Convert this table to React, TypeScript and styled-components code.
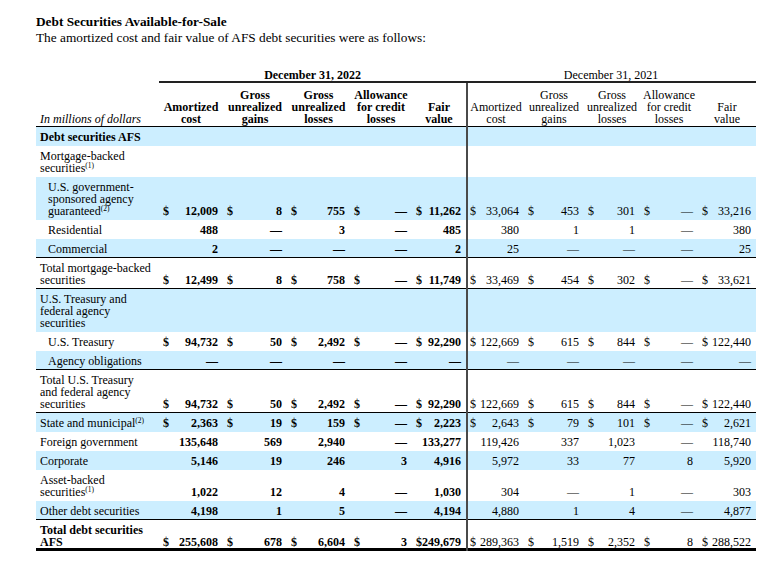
import React from 'react';
import styled, { createGlobalStyle } from 'styled-components';

const GlobalStyle = createGlobalStyle`
  html, body { margin: 0; padding: 0; background: #fff; }
  body {
    font-family: "Liberation Serif", "Times New Roman", serif;
    color: #000;
  }
`;

const COLS = '123px 64px 64px 63px 62px 54px 58px 60px 56px 58px 58px';
const SHADE = '#cceeff';
const DIVIDER = '#4a4a4a';

const Page = styled.div`
  padding: 14px 0 0 36px;
  width: 720px;
`;

const Title = styled.h1`
  margin: 0;
  font-size: 13.3px;
  line-height: 16px;
  font-weight: bold;
`;

const Subtitle = styled.p`
  margin: 0;
  font-size: 13.3px;
  line-height: 16px;
`;

const Table = styled.div`
  margin-top: 21px;
  font-size: 12px;
  line-height: 12px;
`;

const Row = styled.div<{ $shade?: boolean; $rule?: 'thin' | 'thick' }>`
  display: grid;
  grid-template-columns: ${COLS};
  background: ${(p) => (p.$shade ? SHADE : 'transparent')};
  box-shadow: ${(p) =>
    p.$rule === 'thin'
      ? 'inset 0 -1px 0 #000'
      : p.$rule === 'thick'
      ? 'inset 0 -3px 0 #000'
      : 'none'};
`;

const PeriodCell = styled.div<{ $bold?: boolean; $span: string }>`
  grid-column: ${(p) => p.$span};
  text-align: center;
  padding-top: 2px;
  font-weight: ${(p) => (p.$bold ? 'bold' : 'normal')};
  border-bottom: 2px solid #222;
`;

const HeadCell = styled.div<{ $bold?: boolean; $divider?: boolean }>`
  display: flex;
  flex-direction: column;
  justify-content: flex-end;
  text-align: center;
  padding: 6px 0 2px;
  font-weight: ${(p) => (p.$bold ? 'bold' : 'normal')};
  border-left: ${(p) => (p.$divider ? `2px solid ${DIVIDER}` : 'none')};
`;

const UnitsCell = styled.div`
  display: flex;
  align-items: flex-end;
  padding: 6px 4px 2px;
  font-style: italic;
`;

const LabelCell = styled.div<{ $indent?: boolean; $strong?: boolean }>`
  padding: 4px 2px 3px ${(p) => (p.$indent ? 12 : 4)}px;
  font-weight: ${(p) => (p.$strong ? 'bold' : 'normal')};
`;

const NumCell = styled.div<{ $bold?: boolean; $divider?: boolean }>`
  display: flex;
  justify-content: space-between;
  align-items: flex-end;
  padding: 4px 5px 3px ${(p) => (p.$divider ? 2 : 4)}px;
  font-weight: ${(p) => (p.$bold ? 'bold' : 'normal')};
  border-left: ${(p) => (p.$divider ? `2px solid ${DIVIDER}` : 'none')};
  white-space: nowrap;
`;

const Sup = styled.sup`
  font-size: 7.5px;
  line-height: 0;
  vertical-align: 4px;
`;

type RowDef = {
  label: React.ReactNode;
  indent?: boolean;
  strong?: boolean;
  shade?: boolean;
  rule?: 'thin' | 'thick';
  values?: string[];
};

const D = '—';

const rows: RowDef[] = [
  { label: 'Debt securities AFS', strong: true, shade: true },
  {
    label: (
      <>
        Mortgage-backed
        <br />
        securities<Sup>(1)</Sup>
      </>
    ),
  },
  {
    label: (
      <>
        U.S. government-
        <br />
        sponsored agency
        <br />
        guaranteed<Sup>(2)</Sup>
      </>
    ),
    indent: true,
    shade: true,
    values: ['$12,009', '$8', '$755', '$' + D, '$11,262', '$33,064', '$453', '$301', '$' + D, '$33,216'],
  },
  {
    label: 'Residential',
    indent: true,
    values: ['488', D, '3', D, '485', '380', '1', '1', D, '380'],
  },
  {
    label: 'Commercial',
    indent: true,
    shade: true,
    rule: 'thin',
    values: ['2', D, D, D, '2', '25', D, D, D, '25'],
  },
  {
    label: (
      <>
        Total mortgage-backed
        <br />
        securities
      </>
    ),
    rule: 'thin',
    values: ['$12,499', '$8', '$758', '$' + D, '$11,749', '$33,469', '$454', '$302', '$' + D, '$33,621'],
  },
  {
    label: (
      <>
        U.S. Treasury and
        <br />
        federal agency
        <br />
        securities
      </>
    ),
    shade: true,
  },
  {
    label: 'U.S. Treasury',
    indent: true,
    values: ['$94,732', '$50', '$2,492', '$' + D, '$92,290', '$122,669', '$615', '$844', '$' + D, '$122,440'],
  },
  {
    label: 'Agency obligations',
    indent: true,
    shade: true,
    rule: 'thin',
    values: [D, D, D, D, D, D, D, D, D, D],
  },
  {
    label: (
      <>
        Total U.S. Treasury
        <br />
        and federal agency
        <br />
        securities
      </>
    ),
    rule: 'thin',
    values: ['$94,732', '$50', '$2,492', '$' + D, '$92,290', '$122,669', '$615', '$844', '$' + D, '$122,440'],
  },
  {
    label: (
      <>
        State and municipal<Sup>(2)</Sup>
      </>
    ),
    shade: true,
    values: ['$2,363', '$19', '$159', '$' + D, '$2,223', '$2,643', '$79', '$101', '$' + D, '$2,621'],
  },
  {
    label: 'Foreign government',
    values: ['135,648', '569', '2,940', D, '133,277', '119,426', '337', '1,023', D, '118,740'],
  },
  {
    label: 'Corporate',
    shade: true,
    values: ['5,146', '19', '246', '3', '4,916', '5,972', '33', '77', '8', '5,920'],
  },
  {
    label: (
      <>
        Asset-backed
        <br />
        securities<Sup>(1)</Sup>
      </>
    ),
    values: ['1,022', '12', '4', D, '1,030', '304', D, '1', D, '303'],
  },
  {
    label: 'Other debt securities',
    shade: true,
    rule: 'thin',
    values: ['4,198', '1', '5', D, '4,194', '4,880', '1', '4', D, '4,877'],
  },
  {
    label: (
      <>
        Total debt securities
        <br />
        AFS
      </>
    ),
    strong: true,
    rule: 'thick',
    values: ['$255,608', '$678', '$6,604', '$3', '$249,679', '$289,363', '$1,519', '$2,352', '$8', '$288,522'],
  },
];

const headers: React.ReactNode[] = [
  <>Amortized<br />cost</>,
  <>Gross<br />unrealized<br />gains</>,
  <>Gross<br />unrealized<br />losses</>,
  <>Allowance<br />for credit<br />losses</>,
  <>Fair<br />value</>,
];

function Value({ raw, index }: { raw?: string; index: number }) {
  const hasDollar = !!raw && raw.startsWith('$');
  const text = raw ? (hasDollar ? raw.slice(1) : raw) : '';
  return (
    <NumCell $bold={index < 5} $divider={index === 5}>
      <span>{hasDollar ? '$' : ''}</span>
      <span>{text}</span>
    </NumCell>
  );
}

export default function App() {
  return (
    <>
      <GlobalStyle />
      <Page>
        <Title>Debt Securities Available-for-Sale</Title>
        <Subtitle>The amortized cost and fair value of AFS debt securities were as follows:</Subtitle>
        <Table>
          <Row>
            <div />
            <PeriodCell $bold $span="2 / 7">
              December 31, 2022
            </PeriodCell>
            <PeriodCell $span="7 / 12">December 31, 2021</PeriodCell>
          </Row>
          <Row $rule="thin">
            <UnitsCell>In millions of dollars</UnitsCell>
            {headers.map((h, i) => (
              <HeadCell key={`a${i}`} $bold>
                <div>{h}</div>
              </HeadCell>
            ))}
            {headers.map((h, i) => (
              <HeadCell key={`b${i}`} $divider={i === 0}>
                <div>{h}</div>
              </HeadCell>
            ))}
          </Row>
          {rows.map((r, ri) => (
            <Row key={ri} $shade={r.shade} $rule={r.rule}>
              <LabelCell $indent={r.indent} $strong={r.strong}>
                {r.label}
              </LabelCell>
              {Array.from({ length: 10 }).map((_, i) => (
                <Value key={i} raw={r.values ? r.values[i] : undefined} index={i} />
              ))}
            </Row>
          ))}
        </Table>
      </Page>
    </>
  );
}
